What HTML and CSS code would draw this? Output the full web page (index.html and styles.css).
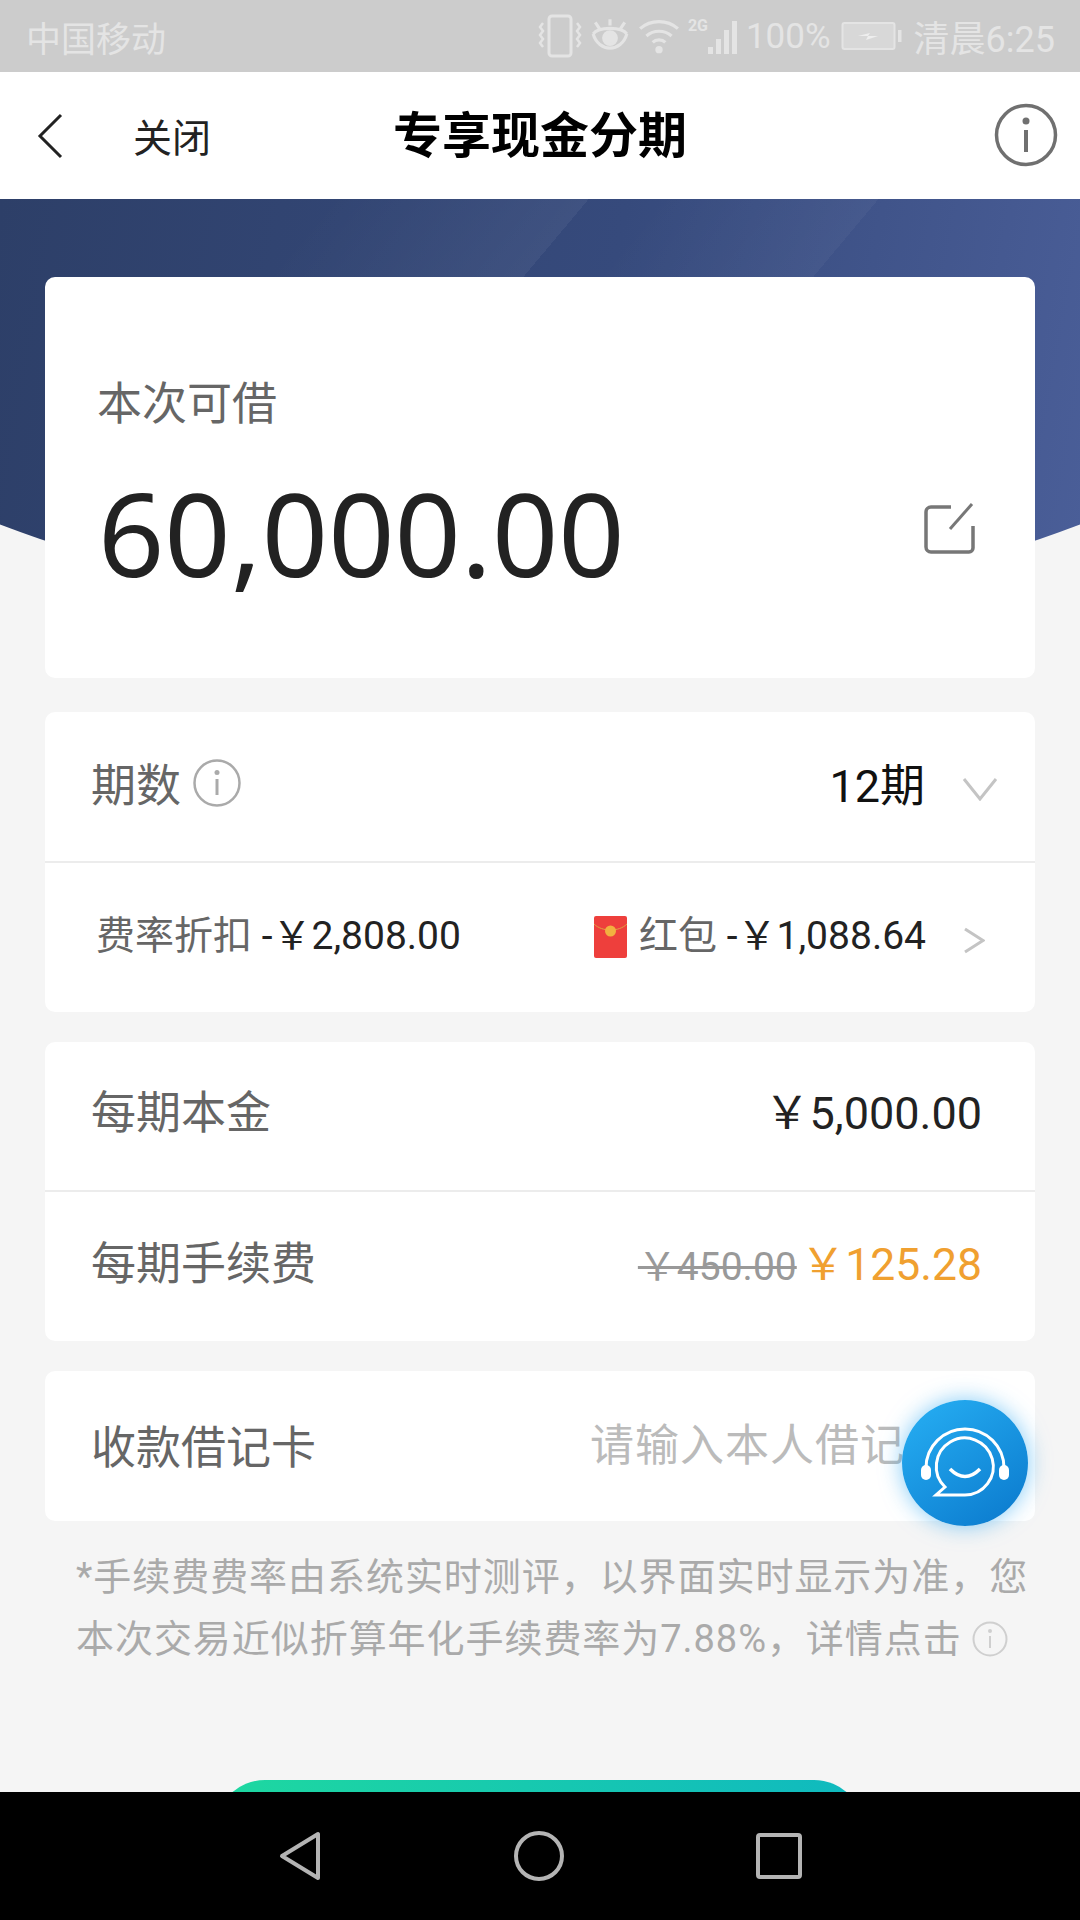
FILE: index.html
```html
<!DOCTYPE html>
<html lang="zh-CN">
<head>
    <meta charset="UTF-8">
    <meta name="viewport" content="width=device-width, initial-scale=1.0">
    <title>专享现金分期</title>
    <link rel="stylesheet" href="styles.css">
</head>
<body>
    <div class="pantalla">
        <!-- Status bar -->
        <div class="status">
            <span class="operador">中国移动</span>
            <div class="status-iconos">
                <svg class="ic-vibra" width="44" height="44" viewBox="0 0 44 44" fill="none" stroke="#e4e4e4" stroke-width="3">
                    <rect x="11" y="2" width="22" height="40" rx="3"/>
                    <path d="M5 9l-3 4 3 4-3 4 3 4-3 4 3 4M39 9l3 4-3 4 3 4-3 4 3 4-3 4" stroke-width="2.500"/>
                </svg>
                <svg class="ic-ojo" width="38" height="40" viewBox="0 0 36 38" fill="none" stroke="#e4e4e4" stroke-width="3">
                    <path d="M2 17c5 18 27 18 32 0M2 17c5-7 27-7 32 0"/>
                    <circle cx="18" cy="21" r="6" fill="#e4e4e4"/>
                    <path d="M18 9V3M8 12L4 6M28 12l4-6"/>
                </svg>
                <svg class="ic-wifi" width="42" height="40" viewBox="0 0 40 38" fill="none" stroke="#e4e4e4" stroke-width="3">
                    <path d="M2 12c10-9 26-9 36 0M8 19c7-6 17-6 24 0M14 25c3-3 9-3 12 0"/>
                    <circle cx="20" cy="32" r="3.500" fill="#e4e4e4" stroke="none"/>
                </svg>
                <div class="red">
                    <span class="red-2g">2G</span>
                    <div class="barras">
                        <i class="b1"></i><i class="b2"></i><i class="b3"></i><i class="b4"></i>
                    </div>
                </div>
                <span class="bateria-txt">100%</span>
                <svg class="ic-bateria" width="62" height="32" viewBox="0 0 62 32" fill="none">
                    <rect x="1.500" y="3" width="52" height="26" rx="2" fill="#d8d8d8" stroke="#e4e4e4" stroke-width="2"/>
                    <rect x="57" y="10" width="3.500" height="12" fill="#e4e4e4"/>
                    <path d="M17 16l12-3-2 3 10 0-12 4 2-4z" fill="#eeeeee"/>
                </svg>
                <span class="hora">清晨6:25</span>
            </div>
        </div>

        <!-- Title bar -->
        <div class="barra">
            <svg class="volver" width="26" height="46" viewBox="0 0 26 46" fill="none" stroke="#222" stroke-width="3">
                <path d="M24 2L3 23l21 21"/>
            </svg>
            <span class="cerrar">关闭</span>
            <span class="titulo">专享现金分期</span>
            <svg class="info" width="64" height="64" viewBox="0 0 64 64" fill="none" stroke="#707070" stroke-width="3.500">
                <circle cx="32" cy="32" r="29.500"/>
                <path d="M32 27v22" stroke-width="4"/>
                <circle cx="32" cy="18" r="3.500" fill="#707070" stroke="none"/>
            </svg>
        </div>

        <div class="contenido">
            <div class="banner"></div>

            <div class="tarjeta monto">
                <div class="monto-label">本次可借</div>
                <div class="monto-fila">
                    <span class="monto-valor">60,000.00</span>
                    <svg class="editar" width="52" height="52" viewBox="0 0 52 52" fill="none" stroke="#777" stroke-width="3.500">
                        <path d="M28 5H8a5 5 0 0 0-5 5v35a5 5 0 0 0 5 5h38a4 4 0 0 0 4-4V24"/>
                        <path d="M27 27L49 2" stroke-width="3"/>
                    </svg>
                </div>
            </div>

            <div class="tarjeta plazo">
                <div class="fila fila-periodo">
                    <div class="fila-izq">
                        <span class="etiqueta">期数</span>
                        <svg class="info-chica" width="48" height="48" viewBox="0 0 48 48" fill="none" stroke="#aaa" stroke-width="2.500">
                            <circle cx="24" cy="24" r="22.500"/>
                            <path d="M24 20v16" stroke-width="3"/>
                            <circle cx="24" cy="13.500" r="2.500" fill="#aaa" stroke="none"/>
                        </svg>
                    </div>
                    <div class="fila-der">
                        <span class="periodo">12期</span>
                        <svg class="flecha-abajo" width="36" height="24" viewBox="0 0 36 24" fill="none" stroke="#c4c4c4" stroke-width="3">
                            <path d="M2 2l16 20L34 2"/>
                        </svg>
                    </div>
                </div>
                <div class="fila fila-descuento">
                    <div class="descuento"><span class="gris">费率折扣</span> -￥2,808.00</div>
                    <div class="fila-der">
                        <svg class="sobre" width="33" height="42" viewBox="0 0 33 42">
                            <rect width="33" height="42" rx="2" fill="#ee3f3c"/>
                            <path d="M0 8c8 8 25 8 33 0" fill="none" stroke="#e0a040" stroke-width="1"/>
                            <circle cx="16.500" cy="15" r="5.500" fill="#f2b040"/>
                        </svg>
                        <div class="descuento descuento-der"><span class="gris">红包</span> -￥1,088.64</div>
                        <svg class="flecha-der" width="22" height="27" viewBox="0 0 22 27" fill="none" stroke="#c4c4c4" stroke-width="3">
                            <path d="M2 2l18 11.500L2 25"/>
                        </svg>
                    </div>
                </div>
            </div>

            <div class="tarjeta cuotas">
                <div class="fila fila-cuota linea">
                    <span class="etiqueta">每期本金</span>
                    <span class="valor">￥5,000.00</span>
                </div>
                <div class="fila fila-cuota">
                    <span class="etiqueta">每期手续费</span>
                    <div class="precios">
                        <span class="tachado">￥450.00</span>
                        <span class="naranja">￥125.28</span>
                    </div>
                </div>
            </div>

            <div class="tarjeta cuenta">
                <div class="fila fila-cuenta">
                    <span class="etiqueta">收款借记卡</span>
                    <span class="placeholder">请输入本人借记</span>
                </div>
            </div>

            <p class="nota">*手续费费率由系统实时测评，以界面实时显示为准，您本次交易近似折算年化手续费率为7.88%，详情点击
                <svg class="info-nota" width="36" height="36" viewBox="0 0 36 36" fill="none" stroke="#cfcfcf" stroke-width="2">
                    <circle cx="18" cy="18" r="16.500"/>
                    <path d="M18 15v12"/>
                    <circle cx="18" cy="10" r="2" fill="#cfcfcf" stroke="none"/>
                </svg>
            </p>

            <div class="boton"></div>

            <!-- Floating customer service button -->
            <div class="ayuda">
                <svg width="126" height="126" viewBox="0 0 126 126" fill="none" stroke="#fff" stroke-width="3">
                    <path d="M24 68a39 39 0 0 1 78 0"/>
                    <path d="M63 95H34l9-8a28.500 28.500 0 1 1 20 8z"/>
                    <path d="M48 69q15 15 30 0" stroke-width="3.500"/>
                    <rect x="19" y="65" width="10" height="15" rx="5" fill="#fff" stroke="none"/>
                    <rect x="97" y="65" width="10" height="15" rx="5" fill="#fff" stroke="none"/>
                </svg>
            </div>
        </div>

        <!-- Navigation bar -->
        <div class="navegacion">
            <svg width="42" height="50" viewBox="0 0 42 50" fill="none" stroke="#b4b4b4" stroke-width="4" stroke-linejoin="round">
                <path d="M39 3v44L3 25z"/>
            </svg>
            <svg width="50" height="50" viewBox="0 0 50 50" fill="none" stroke="#b4b4b4" stroke-width="4">
                <circle cx="25" cy="25" r="23"/>
            </svg>
            <svg width="46" height="46" viewBox="0 0 46 46" fill="none" stroke="#b4b4b4" stroke-width="4" stroke-linejoin="round">
                <rect x="2" y="2" width="42" height="42" rx="2"/>
            </svg>
        </div>
    </div>
</body>
</html>
```

FILE: styles.css
```css
* {
    box-sizing: border-box;
}
body {
    margin: 0;
    padding: 0;
    font-family: Roboto, "Noto Sans CJK SC", sans-serif;
    background-color: #f5f5f5;
}
.pantalla {
    width: 1080px;
    height: 1920px;
    display: flex;
    flex-direction: column;
    overflow: hidden;
}

/* Status bar */
.status {
    height: 72px;
    flex: none;
    background-color: #cccccc;
    color: #e4e4e4;
    display: flex;
    justify-content: space-between;
    align-items: center;
    padding: 0 25px 0 26px;
    font-size: 35px;
}
.status-iconos {
    display: flex;
    align-items: center;
}
.ic-ojo,
.ic-wifi {
    margin-left: 9px;
}
.red {
    display: flex;
    align-items: flex-end;
    height: 33px;
    margin-left: 8px;
    margin-top: 3px;
    position: relative;
    width: 56px;
}
.red-2g {
    font-size: 16px;
    font-weight: 700;
    position: absolute;
    left: 0;
    top: -5px;
}
.barras {
    display: flex;
    align-items: flex-end;
    gap: 3px;
    margin-left: 20px;
}
.barras i {
    display: block;
    width: 5px;
    background-color: #e4e4e4;
}
.barras .b1 { height: 7px; }
.barras .b2 { height: 15px; }
.barras .b3 { height: 24px; }
.barras .b4 { height: 33px; }
.bateria-txt {
    margin-left: 2px;
}
.ic-bateria {
    margin-left: 10px;
}
.hora {
    font-size: 36px;
    margin-left: 11px;
}

/* Title bar */
.barra {
    height: 127px;
    flex: none;
    background-color: #fff;
    display: flex;
    align-items: center;
    padding: 0 22px 0 37px;
    position: relative;
}
.cerrar {
    font-size: 39px;
    color: #222;
    margin-left: 70px;
    margin-top: -2px;
}
.titulo {
    position: absolute;
    left: 0;
    right: 0;
    text-align: center;
    font-size: 49px;
    line-height: 60px;
    top: 35px;
    font-weight: 700;
    color: #000;
}
.info {
    margin-left: auto;
    position: relative;
    margin-top: -2px;
}

/* Content */
.contenido {
    flex: 1;
    position: relative;
    overflow: hidden;
    padding: 78px 45px 0;
}
.banner {
    position: absolute;
    top: 0;
    left: 0;
    width: 1080px;
    height: 345px;
    background:
        linear-gradient(130deg, transparent 250px, rgba(255, 255, 255, 0.05) 451px, transparent 451px, rgba(255, 255, 255, 0) 500px, rgba(255, 255, 255, 0.035) 673px, transparent 673px),
        linear-gradient(100deg, #2d3f68 0%, #364a7c 55%, #4a5e98 100%);
    clip-path: ellipse(900px 457px at 50% -40px);
}
.tarjeta {
    position: relative;
    background-color: #fff;
    border-radius: 10px;
    margin-bottom: 30px;
}
.monto {
    height: 401px;
    padding: 102px 60px 0 52px;
    margin-bottom: 34px;
}
.monto-label {
    font-size: 45px;
    line-height: 52px;
    color: #666;
}
.monto-fila {
    display: flex;
    justify-content: space-between;
    align-items: center;
    margin-top: 31px;
    padding-left: 1px;
}
.monto-valor {
    font-family: "Noto Sans", sans-serif;
    font-size: 116px;
    line-height: 140px;
    color: #222;
}
.editar {
    margin-top: -8px;
}
.fila {
    display: flex;
    justify-content: space-between;
    align-items: center;
}
.fila-izq,
.fila-der {
    display: flex;
    align-items: center;
}
.etiqueta {
    font-size: 45px;
    color: #666;
}
.plazo {
    height: 300px;
}
.fila-periodo {
    height: 151px;
    padding: 0 37px 0 46px;
    border-bottom: 2px solid #ececec;
}
.fila-periodo .fila-izq,
.fila-periodo .periodo {
    margin-bottom: 8px;
}
.info-chica {
    margin-left: 12px;
    margin-top: 0;
}
.periodo {
    font-size: 45px;
    color: #111;
    margin-right: 37px;
}
.flecha-abajo {
    margin-top: 4px;
}
.fila-descuento {
    height: 149px;
    padding: 0 50px 0 51px;
}
.descuento {
    font-size: 39px;
    color: #222;
    margin-bottom: 12px;
}
.descuento-der {
    font-size: 39px;
}
.gris {
    color: #666;
}
.sobre {
    margin-right: 12px;
    margin-bottom: 2px;
}
.flecha-der {
    margin-left: 37px;
    margin-top: 6px;
}
.cuotas {
    height: 299px;
}
.fila-cuota {
    height: 150px;
    padding: 0 53px 0 46px;
}
.fila-cuota > * {
    margin-bottom: 14px;
}
.linea {
    border-bottom: 2px solid #ececec;
}
.valor {
    font-size: 45px;
    color: #222;
}
.tachado {
    font-size: 39px;
    color: #999;
    text-decoration: line-through;
}
.naranja {
    font-size: 44.5px;
    color: #f0a030;
}
.cuenta {
    height: 150px;
    margin-bottom: 0;
}
.fila-cuenta {
    height: 150px;
    padding: 0 0 0 46px;
    justify-content: flex-start;
}
.fila-cuenta .etiqueta {
    margin-bottom: 4px;
}
.placeholder {
    font-size: 44px;
    color: #bbb;
    margin-left: 274px;
    letter-spacing: 1px;
    margin-bottom: 8px;
    white-space: nowrap;
}
.nota {
    margin: 25px 0 0 31px;
    width: 960px;
    font-size: 38px;
    line-height: 62px;
    letter-spacing: 0.95px;
    color: #aaa;
}
.info-nota {
    vertical-align: middle;
    margin-top: -6px;
}
.boton {
    position: absolute;
    top: 1581px;
    left: 215px;
    width: 649px;
    height: 100px;
    border-radius: 50px;
    background: linear-gradient(100deg, #1ed8a0, #0fb8c0);
}
.ayuda {
    position: absolute;
    left: 902px;
    top: 1201px;
    width: 126px;
    height: 126px;
    border-radius: 50%;
    background: linear-gradient(145deg, #27b0f4, #0a78cc);
    box-shadow: 0 0 22px rgba(30, 160, 240, 0.55);
}

/* Navigation bar */
.navegacion {
    height: 128px;
    flex: none;
    background-color: #000;
    display: flex;
    align-items: center;
    justify-content: space-between;
    padding: 0 278px 0 279px;
}
```
